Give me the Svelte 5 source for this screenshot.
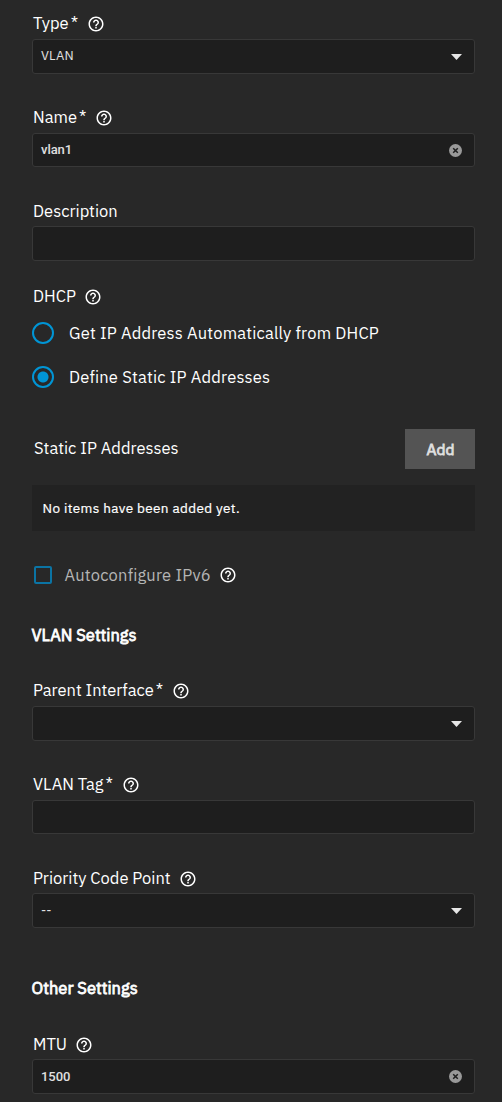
<script>
  let name = $state('vlan1');
  let mtu = $state('1500');
  let dhcp = $state(false);
</script>

{#snippet help()}
  <svg class="help" width="18" height="18" viewBox="0 0 24 24" aria-hidden="true">
    <path d="M11 18h2v-2h-2v2zm1-16C6.48 2 2 6.48 2 12s4.48 10 10 10 10-4.48 10-10S17.52 2 12 2zm0 18c-4.41 0-8-3.59-8-8s3.59-8 8-8 8 3.590 8 8-3.590 8-8 8zm0-14c-2.210 0-4 1.790-4 4h2c0-1.100.9-2 2-2s2 .9 2 2c0 2-3 1.750-3 5h2c0-2.250 3-2.500 3-5 0-2.210-1.790-4-4-4z" />
  </svg>
{/snippet}

{#snippet arrow()}
  <svg class="arrow" width="11" height="6" viewBox="0 0 11 6" aria-hidden="true"><path d="M0 0h11L5.500 6z" /></svg>
{/snippet}

{#snippet clear(reset)}
  <button class="clear" type="button" aria-label="Clear" onclick={reset}>
    <svg width="13" height="13" viewBox="0 0 13 13"><circle cx="6.500" cy="6.500" r="6.500" /><path d="M4.200 4.200l4.600 4.600M8.800 4.200L4.200 8.800" /></svg>
  </button>
{/snippet}

<form class="form">
  <div class="field">
    <div class="label">Type<span class="req">*</span>{@render help()}</div>
    <div class="box"><span class="value v-vlan">VLAN</span>{@render arrow()}</div>
  </div>
  <div class="field name">
    <div class="label">Name<span class="req">*</span>{@render help()}</div>
    <div class="box short"><span class="value typed">{name}</span>{@render clear(() => (name = ''))}</div>
  </div>
  <div class="field desc">
    <div class="label tight">Description</div>
    <div class="box"></div>
  </div>

  <div class="label dhcp">DHCP{@render help()}</div>
  <label class="radio">
    <input type="radio" checked={dhcp} onchange={() => (dhcp = true)} name="dhcp" />
    <span>Get IP Address Automatically from DHCP</span>
  </label>
  <label class="radio">
    <input type="radio" checked={!dhcp} onchange={() => (dhcp = false)} name="dhcp" />
    <span>Define Static IP Addresses</span>
  </label>

  <div class="static">
    <span>Static IP Addresses</span>
    <button class="add" type="button">Add</button>
  </div>
  <div class="empty">No items have been added yet.</div>

  <div class="check"><input type="checkbox" aria-label="Autoconfigure IPv6" /><span>Autoconfigure IPv6</span>{@render help()}</div>

  <h3>VLAN Settings</h3>
  <div class="field parent">
    <div class="label">Parent Interface<span class="req">*</span>{@render help()}</div>
    <div class="box">{@render arrow()}</div>
  </div>
  <div class="field tag">
    <div class="label">VLAN Tag<span class="req">*</span>{@render help()}</div>
    <div class="box short"></div>
  </div>
  <div class="field pcp">
    <div class="label tight">Priority Code Point{@render help()}</div>
    <div class="box"><span class="value">--</span>{@render arrow()}</div>
  </div>

  <h3 class="other-title">Other Settings</h3>
  <div class="field mtu">
    <div class="label tight">MTU{@render help()}</div>
    <div class="box"><span class="value typed">{mtu}</span>{@render clear(() => (mtu = ''))}</div>
  </div>
</form>

<style>
  :global(body) { background: #282828; }
  .form {
    box-sizing: border-box;
    height: 1102px;
    padding: 7px 27px 0 32px;
    overflow: hidden;
    background: #282828;
    color: #fff;
    font: 16.5px/24px "IBM Plex Sans", Roboto, sans-serif;
    white-space: nowrap;
  }
  .label { display: flex; align-items: center; height: 32px; padding-left: 1px; }
  .label.tight { height: 31px; }
  .label.dhcp { height: 28px; margin-top: 21px; margin-bottom: 1px; }
  .req { width: 8px; margin-left: 2px; }
  .parent .req, .parent .label { letter-spacing: -.02px; }
  .help { flex: none; margin-left: 8px; fill: #fff; position: relative; top: 1px; }
  .box {
    display: flex;
    align-items: center;
    box-sizing: border-box;
    height: 35px;
    padding: 0 12px 0 8px;
    border: 1px solid #383838;
    border-radius: 3px;
    background: #1e1e1e;
  }
  .box.short { height: 34px; }
  .value { color: #e0e0e0; font-size: 13px; }
  .v-vlan { margin-top: -2px; letter-spacing: .15px; }
  .value.typed { font-family: Roboto, sans-serif; font-weight: 500; letter-spacing: -.05px; }
  .arrow { margin-left: auto; fill: #e6e6e6; }
  .clear { display: flex; margin-left: auto; padding: 0; border: 0; background: none; }
  .clear circle { fill: #999; }
  .clear path { stroke: #1e1e1e; stroke-width: 1.5; }
  .name, .tag { margin-top: 27px; }
  .desc, .pcp { margin-top: 28px; }
  .parent { margin-top: 23px; }
  .mtu { margin-top: 24px; }

  .radio { display: flex; align-items: center; gap: 15px; height: 44px; letter-spacing: .18px; }
  .radio input {
    appearance: none;
    box-sizing: border-box;
    flex: none;
    width: 22px;
    height: 22px;
    margin: 0;
    border: 2px solid #0095d5;
    border-radius: 50%;
  }
  .radio input:checked { background: radial-gradient(circle, #0095d5 5px, transparent 6px); }

  .static { display: flex; align-items: center; justify-content: space-between; height: 40px; margin-top: 30px; padding-left: 2px; }
  .static span { padding-bottom: 2px; }
  .add {
    width: 70px;
    height: 40px;
    padding: 0 0 0 1px;
    border: 0;
    background: #545454;
    color: #e0e0e0;
    font: 15.5px "IBM Plex Sans", Roboto, sans-serif;
    -webkit-text-stroke: .8px #e0e0e0;
  }
  .empty { display: flex; align-items: center; height: 46px; margin-top: 16px; padding-left: 10.5px; background: #222; font-size: 13.5px; letter-spacing: .38px; -webkit-text-stroke: .2px #fff; }
  .check { display: flex; align-items: center; height: 32px; margin-top: 28px; padding-left: 2px; }
  .check input {
    appearance: none;
    box-sizing: border-box;
    width: 18px;
    height: 18px;
    margin: 0 12.5px 0 0;
    border: 2px solid #0b74a4;
    border-radius: 2px;
  }
  .check span { color: #b5b5b5; letter-spacing: .2px; }
  .check .help { top: 0; }
  h3 { height: 32px; margin: 28px 0 0 -.5px; font: 16.5px/32px "IBM Plex Sans", Roboto, sans-serif; -webkit-text-stroke: .8px #fff; }
  .other-title { margin-top: 44px; }
</style>
